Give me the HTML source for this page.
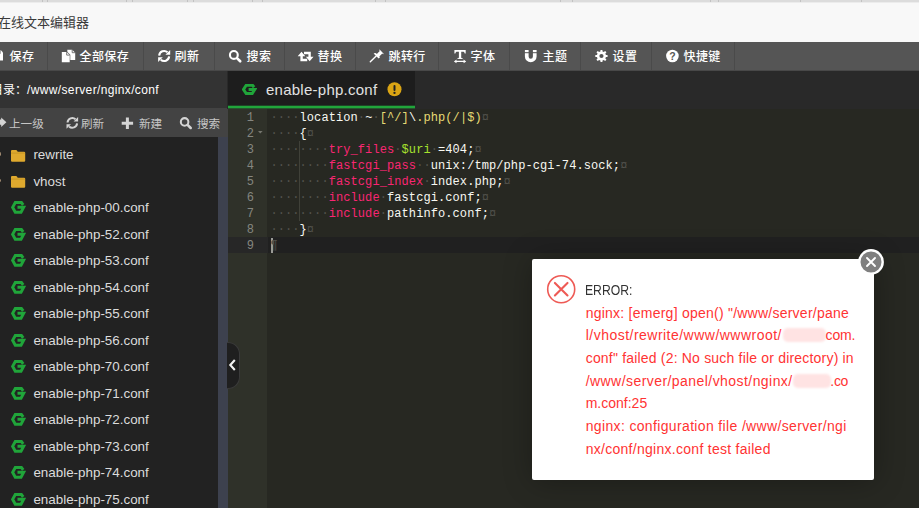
<!DOCTYPE html>
<html lang="zh-CN">
<head>
<meta charset="utf-8">
<title>在线文本编辑器</title>
<style>
*{box-sizing:border-box;margin:0;padding:0}
html,body{width:919px;height:508px;overflow:hidden;background:#272822}
body{position:relative;font-family:"Liberation Sans","Noto Sans CJK SC",sans-serif;font-size:12px;color:#fff}
.abs{position:absolute}
#strip{left:0;top:0;width:919px;height:3px;background:linear-gradient(to bottom,#dcdcdc 0,#dcdcdc 2px,#ececec 2px,#ececec 3px)}
#strip i{position:absolute;top:0;width:1px;height:2px;background:#c2c2c2}
#title{left:0;top:3px;width:919px;height:39px;background:#f8f8f8;color:#3a3a3a;font-size:13px;line-height:39px;white-space:nowrap}
#title span{position:absolute;left:-2px;top:0}
#tb{left:0;top:42px;width:919px;height:29px;background:#555;border-bottom:1px solid #484848}
.btn{position:absolute;top:0;height:28px;border-right:1px solid #4a4a4a;font-weight:500;font-size:12px;letter-spacing:.4px;line-height:28px;color:#fff;white-space:nowrap}
.btn svg{position:absolute;top:7px;fill:#fff}
.btn span{position:absolute;top:1px;margin-left:.5px}
#side{left:0;top:71px;width:227px;height:437px;background:#222}
#path{left:0;top:0;width:228px;height:37px;background:#333;color:#fff;font-size:12px;line-height:37px;white-space:nowrap}
#stb{left:0;top:37px;width:228px;height:29px;background:#434343;color:#c6c6c6;font-size:11.6px;line-height:29px;white-space:nowrap}
#stb span{position:absolute;top:1px}
#stb svg{position:absolute;fill:#d8d8d8}
#files{left:0;top:65px;width:219px;height:372px}
.row{position:absolute;left:0;width:219px;height:26px;line-height:26px;font-size:13.4px;color:#dcdcdc;white-space:nowrap}
.row span{position:absolute;left:33.4px;top:0}
.row svg{position:absolute;left:10.8px;top:6px}
.row svg.fd{left:11.3px;top:7.5px}
.row b{position:absolute;left:-2px;top:10px;width:3.4px;height:3.4px;border-radius:2px;background:#a08a70}
#divider{left:218px;top:137px;width:10px;height:371px;background:#3d414e}
#handle{left:227px;top:342px;width:13px;height:47px;background:#1f1f1f;border:1px solid #3a3a3a;border-left:none;border-radius:0 12px 12px 0}
#tabs{left:227px;top:71px;width:692px;height:38px;background:#292929}
#tab{left:1px;top:0;width:187px;height:38px;background:#1d1d1d;color:#e2e2e2;font-size:15px;line-height:37px;white-space:nowrap}
#ed{left:228px;top:109px;width:691px;height:399px;background:#272822;font-family:"Liberation Mono",monospace;font-size:12px;line-height:16px;color:#f8f8f2;overflow:hidden}
#gutter{left:0;top:0;width:39px;height:399px;background:#2f3129}
.ln{color:#858680;position:absolute;left:0;width:26px;text-align:right;height:16px}
.cl{position:absolute;left:42.4px;height:16px;white-space:pre;letter-spacing:.085px}
.inv{color:#52524d}
.k{color:#f92672}.v{color:#a6e22e}.s{color:#e6db74}
#dlg{left:532px;top:259px;width:342px;height:221px;background:#fff;border-radius:2px;box-shadow:1px 1px 30px rgba(0,0,0,.3)}
#dlg .t{position:absolute;left:53.7px;white-space:nowrap;font-size:14px;line-height:22px;color:#f33}
.smudge{background:#ffe3e3;border-radius:5px;filter:blur(1.2px)}
#close{left:325.6px;top:-10.1px;width:26px;height:26px}
#tab i{position:absolute;left:0;top:34px;width:187px;height:4px;background:linear-gradient(to bottom,#1e4526 0,#1e4526 1px,#21a53b 1px,#21a53b 3px,#24562e 3px,#24562e 4px)}
</style>
</head>
<body>
<div id="strip" class="abs"><i style="left:42px"></i><i style="left:47px"></i><i style="left:126px"></i><i style="left:132px"></i><i style="left:187px"></i><i style="left:193px"></i><i style="left:252px"></i><i style="left:262px"></i><i style="left:375px"></i><i style="left:385px"></i><i style="left:560px"></i><i style="left:572px"></i><i style="left:710px"></i><i style="left:718px"></i><i style="left:800px"></i><i style="left:861px"></i></div>
<div id="title" class="abs"><span>在线文本编辑器</span></div>

<div id="tb" class="abs">
  <div class="btn" style="left:0;width:48px"><span style="left:9px">保存</span></div>
  <div class="btn" style="left:48px;width:96px"><span style="left:31px">全部保存</span></div>
  <div class="btn" style="left:144px;width:71px"><span style="left:30px">刷新</span></div>
  <div class="btn" style="left:215px;width:70px"><span style="left:31px">搜索</span></div>
  <div class="btn" style="left:285px;width:71px"><span style="left:32px">替换</span></div>
  <div class="btn" style="left:356px;width:83px"><span style="left:32px">跳转行</span></div>
  <div class="btn" style="left:439px;width:71px"><span style="left:31px">字体</span></div>
  <div class="btn" style="left:510px;width:71px"><span style="left:32px">主题</span></div>
  <div class="btn" style="left:581px;width:71px"><span style="left:31px">设置</span></div>
  <div class="btn" style="left:652px;width:83px"><span style="left:31px">快捷键</span></div>
</div>

<div id="side" class="abs">
  <div id="path" class="abs"><span class="abs" style="left:-9px;top:1px">目录：<span style="letter-spacing:.36px">/www/server/nginx/conf</span></span></div>
  <div id="stb" class="abs">
    <span style="left:9px">上一级</span>
    <span style="left:81px">刷新</span>
    <span style="left:139px">新建</span>
    <span style="left:197px">搜索</span>
  </div>
  <div id="files" class="abs">
    <div class="row" style="top:6.4px"><b></b><svg class="fd" width="15" height="12" viewBox="0 0 15 12"><path d="M0 1.1Q0 0 1.1 0H5Q5.7 0 6.1.7L6.700000000000001 1.8H13.1Q14.2 1.8 14.2 2.9V10.700000000000001Q14.2 11.8 13.1 11.8H1.1Q0 11.8 0 10.700000000000001z" fill="#dfa92e"/><path d="M0 3.1H14.2" stroke="#b98a22" stroke-width=".6"/></svg><span>rewrite</span></div>
    <div class="row" style="top:32.9px"><b></b><svg class="fd" width="15" height="12" viewBox="0 0 15 12"><path d="M0 1.1Q0 0 1.1 0H5Q5.7 0 6.1.7L6.700000000000001 1.8H13.1Q14.2 1.8 14.2 2.9V10.700000000000001Q14.2 11.8 13.1 11.8H1.1Q0 11.8 0 10.700000000000001z" fill="#dfa92e"/><path d="M0 3.1H14.2" stroke="#b98a22" stroke-width=".6"/></svg><span>vhost</span></div>
    <div class="row" style="top:59.4px"><svg width="15" height="13" viewBox="0 0 15 13"><path d="M12.2 3.9L10.4 1.5H4.3L1.6 6.35L4.3 11.2H10L12.6 6.35H6.5" fill="none" stroke="#20a53a" stroke-width="3" stroke-linejoin="miter"/></svg><span>enable-php-00.conf</span></div>
    <div class="row" style="top:85.8px"><svg width="15" height="13" viewBox="0 0 15 13"><path d="M12.2 3.9L10.4 1.5H4.3L1.6 6.35L4.3 11.2H10L12.6 6.35H6.5" fill="none" stroke="#20a53a" stroke-width="3" stroke-linejoin="miter"/></svg><span>enable-php-52.conf</span></div>
    <div class="row" style="top:112.3px"><svg width="15" height="13" viewBox="0 0 15 13"><path d="M12.2 3.9L10.4 1.5H4.3L1.6 6.35L4.3 11.2H10L12.6 6.35H6.5" fill="none" stroke="#20a53a" stroke-width="3" stroke-linejoin="miter"/></svg><span>enable-php-53.conf</span></div>
    <div class="row" style="top:138.8px"><svg width="15" height="13" viewBox="0 0 15 13"><path d="M12.2 3.9L10.4 1.5H4.3L1.6 6.35L4.3 11.2H10L12.6 6.35H6.5" fill="none" stroke="#20a53a" stroke-width="3" stroke-linejoin="miter"/></svg><span>enable-php-54.conf</span></div>
    <div class="row" style="top:165.3px"><svg width="15" height="13" viewBox="0 0 15 13"><path d="M12.2 3.9L10.4 1.5H4.3L1.6 6.35L4.3 11.2H10L12.6 6.35H6.5" fill="none" stroke="#20a53a" stroke-width="3" stroke-linejoin="miter"/></svg><span>enable-php-55.conf</span></div>
    <div class="row" style="top:191.8px"><svg width="15" height="13" viewBox="0 0 15 13"><path d="M12.2 3.9L10.4 1.5H4.3L1.6 6.35L4.3 11.2H10L12.6 6.35H6.5" fill="none" stroke="#20a53a" stroke-width="3" stroke-linejoin="miter"/></svg><span>enable-php-56.conf</span></div>
    <div class="row" style="top:218.2px"><svg width="15" height="13" viewBox="0 0 15 13"><path d="M12.2 3.9L10.4 1.5H4.3L1.6 6.35L4.3 11.2H10L12.6 6.35H6.5" fill="none" stroke="#20a53a" stroke-width="3" stroke-linejoin="miter"/></svg><span>enable-php-70.conf</span></div>
    <div class="row" style="top:244.7px"><svg width="15" height="13" viewBox="0 0 15 13"><path d="M12.2 3.9L10.4 1.5H4.3L1.6 6.35L4.3 11.2H10L12.6 6.35H6.5" fill="none" stroke="#20a53a" stroke-width="3" stroke-linejoin="miter"/></svg><span>enable-php-71.conf</span></div>
    <div class="row" style="top:271.2px"><svg width="15" height="13" viewBox="0 0 15 13"><path d="M12.2 3.9L10.4 1.5H4.3L1.6 6.35L4.3 11.2H10L12.6 6.35H6.5" fill="none" stroke="#20a53a" stroke-width="3" stroke-linejoin="miter"/></svg><span>enable-php-72.conf</span></div>
    <div class="row" style="top:297.7px"><svg width="15" height="13" viewBox="0 0 15 13"><path d="M12.2 3.9L10.4 1.5H4.3L1.6 6.35L4.3 11.2H10L12.6 6.35H6.5" fill="none" stroke="#20a53a" stroke-width="3" stroke-linejoin="miter"/></svg><span>enable-php-73.conf</span></div>
    <div class="row" style="top:324.2px"><svg width="15" height="13" viewBox="0 0 15 13"><path d="M12.2 3.9L10.4 1.5H4.3L1.6 6.35L4.3 11.2H10L12.6 6.35H6.5" fill="none" stroke="#20a53a" stroke-width="3" stroke-linejoin="miter"/></svg><span>enable-php-74.conf</span></div>
    <div class="row" style="top:350.6px"><svg width="15" height="13" viewBox="0 0 15 13"><path d="M12.2 3.9L10.4 1.5H4.3L1.6 6.35L4.3 11.2H10L12.6 6.35H6.5" fill="none" stroke="#20a53a" stroke-width="3" stroke-linejoin="miter"/></svg><span>enable-php-75.conf</span></div>
  </div>
</div>
<!--ICONS-->
<svg class="abs" style="left:0;top:0;pointer-events:none" width="919" height="140" viewBox="0 0 919 140">
<path d="M-9 50.6h10.2l1.8 1.8v8.2h-12z" fill="#fff"/><rect x="-6" y="50.6" width="6.5" height="3.2" fill="#555"/>
<path d="M67.3 49.7h4.9l3 3v7.300000000000001h-7.9z" fill="#fff"/>
<path d="M61.8 52.1h4.9l3 3v7.2h-7.9z" fill="#fff" stroke="#555" stroke-width="1.2" paint-order="stroke"/>
<path d="M66.7 52.1v3h3" fill="none" stroke="#555" stroke-width=".8"/><path d="M72.2 49.7v3h3" fill="none" stroke="#555" stroke-width=".8"/>
<path d="M159.17 55.56 A5.00 5.00 0 0 1 167.50 52.28" fill="none" stroke="#fff" stroke-width="2.10"/><path d="M169.13 56.44 A5.00 5.00 0 0 1 160.80 59.72" fill="none" stroke="#fff" stroke-width="2.10"/><path d="M170.20 49.95 v4.72 h-4.72 z" fill="#fff"/><path d="M158.10 62.05 v-4.72 h4.72 z" fill="#fff"/>
<circle cx="233.86" cy="54.96" r="3.91" fill="none" stroke="#fff" stroke-width="2.11"/><path d="M237.23 58.33 L240.20 61.30" stroke="#fff" stroke-width="2.64" stroke-linecap="round"/>
<path d="M301.6 55V60H307.2M309.6 58V53H304" fill="none" stroke="#fff" stroke-width="2.4"/><path d="M297.7 56.2L301.5 51.7L305.3 56.2zM305.9 56.8H313.5L309.7 61.3z" fill="#fff"/>
<path d="M370.3 61.8L376.2 55.9" stroke="#fff" stroke-width="1.4" stroke-linecap="round"/><path d="M373.6 53.6L378.6 58.6L380 57.2L379.3 56.5L382.3 53.5L383.2 54.2L383.7 53.700000000000003L379.6 49.6L379.1 50.1L379.8 51L376.8 54L376.1 53.3L375 53.1z" fill="#fff"/>
<path d="M454.4 50h11.3v3.4h-1c-.2-1.100000000000001-.7-1.6-1.8-1.6h-1.7v5.4c0 .7.4 1 1.500000000000001 1v.9h-5.3v-.9c1.1 0 1.5-.3 1.5-1v-5.4h-1.7c-1.1 0-1.6.5-1.8 1.6h-1z" fill="#fff"/>
<path d="M453.9 61.4l2.6-1.9v1.3h7.1v-1.3l2.6 1.9l-2.6 1.9v-1.3h-7.1v1.3z" fill="#fff"/>
<path d="M526.75 50V56.4A4 4.100000000000001 0 0 0 534.75 56.4V50" fill="none" stroke="#fff" stroke-width="3.7"/><rect x="524" y="52.2" width="14" height="1" fill="#555"/>
<path d="M605.92 54.93 L607.57 55.03 L607.57 56.97 L605.92 57.07 L605.37 58.40 L606.47 59.64 L605.09 61.02 L603.85 59.92 L602.52 60.47 L602.42 62.12 L600.48 62.12 L600.38 60.47 L599.05 59.92 L597.81 61.02 L596.43 59.64 L597.53 58.40 L596.98 57.07 L595.33 56.97 L595.33 55.03 L596.98 54.93 L597.53 53.60 L596.43 52.36 L597.81 50.98 L599.05 52.08 L600.38 51.53 L600.48 49.88 L602.42 49.88 L602.52 51.53 L603.85 52.08 L605.09 50.98 L606.47 52.36 L605.37 53.60Z M599.35 56.00 a2.10 2.10 0 1 0 4.20 0 a2.10 2.10 0 1 0 -4.20 0Z" fill="#fff" fill-rule="evenodd"/>
<circle cx="672.4" cy="56" r="6.3" fill="#fff"/><text x="672.4" y="59.6" font-family="Liberation Sans,sans-serif" font-weight="bold" font-size="10.5" fill="#555" text-anchor="middle">?</text>
<path d="M-3 119.6h4.2v-2.2l5.2 4.8l-5.2 4.8v-2.2h-4.2z" fill="#d4d4d4"/>
<path d="M67.52 122.48 A4.80 4.80 0 0 1 75.51 119.33" fill="none" stroke="#d4d4d4" stroke-width="2.00"/><path d="M77.08 123.32 A4.80 4.80 0 0 1 69.09 126.47" fill="none" stroke="#d4d4d4" stroke-width="2.00"/><path d="M78.10 117.10 v4.52 h-4.52 z" fill="#d4d4d4"/><path d="M66.50 128.70 v-4.52 h4.52 z" fill="#d4d4d4"/>
<path d="M125.9 117.5h3.0v4.2h4.2v3.0h-4.2v4.2h-3.0v-4.2h-4.2v-3.0h4.2z" fill="#d4d4d4"/>
<circle cx="184.60" cy="121.90" r="3.78" fill="none" stroke="#d4d4d4" stroke-width="2.04"/><path d="M187.86 125.16 L190.70 128.00" stroke="#d4d4d4" stroke-width="2.55" stroke-linecap="round"/>
</svg>
<!--/ICONS-->
<div id="divider" class="abs"></div>

<div id="tabs" class="abs">
  <div id="tab" class="abs"><i></i><svg class="abs" style="left:14px;top:13px" width="15" height="12" viewBox="0 0 15 12"><path d="M12.1 3.3L10.5 1.3H4.2L1.5 5.45L4.2 9.6H10.2L12.8 5.45H6.6" fill="none" stroke="#20a53a" stroke-width="3" stroke-linejoin="miter"/></svg><span class="abs" style="left:38px;letter-spacing:.25px">enable-php.conf</span><svg class="abs" style="left:159px;top:11px" width="15" height="15" viewBox="0 0 15 15"><circle cx="7.5" cy="7.3" r="7" fill="#dba514"/><path d="M7.5 3.9V8" stroke="#222" stroke-width="2" stroke-linecap="round"/><circle cx="7.5" cy="10.9" r="1.15" fill="#222"/></svg></div>
</div>

<div id="ed" class="abs">
  <div id="gutter" class="abs"></div>
  <div class="abs" id="actg" style="left:0;top:128px;width:40px;height:16px;background:#272727"></div>
  <div class="abs" id="actl" style="left:40px;top:128px;width:651px;height:16px;background:#202020"></div>
  <svg class="abs" style="left:30px;top:22px" width="5" height="3" viewBox="0 0 5 3"><path d="M0 0H4.6L2.3 2.6z" fill="#76776f"/></svg>
  <div class="abs" style="left:71px;top:32px;width:1px;height:80px;background:#404139"></div>
  <div class="abs" style="left:43px;top:129px;width:1.5px;height:15px;background:#9b9b97"></div>
  <div class="ln" style="top:1px">1</div>
  <div class="ln" style="top:17px">2</div>
  <div class="ln" style="top:33px">3</div>
  <div class="ln" style="top:49px">4</div>
  <div class="ln" style="top:65px">5</div>
  <div class="ln" style="top:81px">6</div>
  <div class="ln" style="top:97px">7</div>
  <div class="ln" style="top:113px">8</div>
  <div class="ln" style="top:129px">9</div>
  <div class="cl" style="top:1px"><span class="inv">····</span>location<span class="inv">·</span>~<span class="inv">·</span><span class="s">[^/]</span>\<span class="s">.php(/|$)</span><span class="inv">¤</span></div>
  <div class="cl" style="top:17px"><span class="inv">····</span>{<span class="inv">¤</span></div>
  <div class="cl" style="top:33px"><span class="inv">········</span><span class="k">try_files</span><span class="inv">·</span><span class="v">$uri</span><span class="inv">·</span>=404;<span class="inv">¤</span></div>
  <div class="cl" style="top:49px"><span class="inv">········</span><span class="k">fastcgi_pass</span><span class="inv">··</span>unix:/tmp/php-cgi-74.sock;<span class="inv">¤</span></div>
  <div class="cl" style="top:65px"><span class="inv">········</span><span class="k">fastcgi_index</span><span class="inv">·</span>index.php;<span class="inv">¤</span></div>
  <div class="cl" style="top:81px"><span class="inv">········</span><span class="k">include</span><span class="inv">·</span>fastcgi.conf;<span class="inv">¤</span></div>
  <div class="cl" style="top:97px"><span class="inv">········</span><span class="k">include</span><span class="inv">·</span>pathinfo.conf;<span class="inv">¤</span></div>
  <div class="cl" style="top:113px"><span class="inv">····</span>}<span class="inv">¤</span></div>
  <div class="cl" style="top:129px"><span class="inv">¶</span></div>
</div>
<div id="handle" class="abs"><svg class="abs" style="left:1px;top:15px" width="9" height="14" viewBox="0 0 9 14"><path d="M6.8 2L2.3 7L6.8 12" fill="none" stroke="#f2f2f2" stroke-width="2.1"/></svg></div>

<div id="dlg" class="abs">
  <svg class="abs" style="left:14px;top:15px" width="31" height="31" viewBox="0 0 31 31"><circle cx="15.2" cy="15.2" r="13.5" fill="none" stroke="#ee5a55" stroke-width="1.6"/><path d="M8.9 8.9L21.5 21.5M21.5 8.9L8.9 21.5" stroke="#ee5a55" stroke-width="2.1" stroke-linecap="round"/></svg>
  <div class="t" style="top:20px;color:#333;font-size:14.5px;left:53px;transform:scaleX(.84);transform-origin:0 50%">ERROR:</div>
  <div class="t" style="top:43px;letter-spacing:.24px">nginx: [emerg] open() "/www/server/pane</div>
  <div class="t" style="top:65px;letter-spacing:.48px">l/vhost/rewrite/www/wwwroot/</div>
  <div class="abs smudge" style="left:251px;top:69px;width:43px;height:14px"></div>
  <div class="t" style="top:65px;left:293.6px;letter-spacing:-.2px">com.</div>
  <div class="t" style="top:88px;letter-spacing:.19px">conf" failed (2: No such file or directory) in</div>
  <div class="t" style="top:111px;letter-spacing:.44px">/www/server/panel/vhost/nginx/</div>
  <div class="abs smudge" style="left:261px;top:115px;width:38px;height:14px"></div>
  <div class="t" style="top:111px;left:298.3px;letter-spacing:-.3px">.co</div>
  <div class="t" style="top:133px">m.conf:25</div>
  <div class="t" style="top:156px;letter-spacing:.35px">nginx: configuration file /www/server/ngi</div>
  <div class="t" style="top:179px;letter-spacing:.28px">nx/conf/nginx.conf test failed</div>
  <div id="close" class="abs"><svg width="26" height="26" viewBox="0 0 26 26"><circle cx="13" cy="13" r="11.7" fill="#7f7f7f" stroke="#fff" stroke-width="2.4"/><path d="M9 9L17 17M17 9L9 17" stroke="#fff" stroke-width="1.9" stroke-linecap="round"/></svg></div>
</div>
</body>
</html>
